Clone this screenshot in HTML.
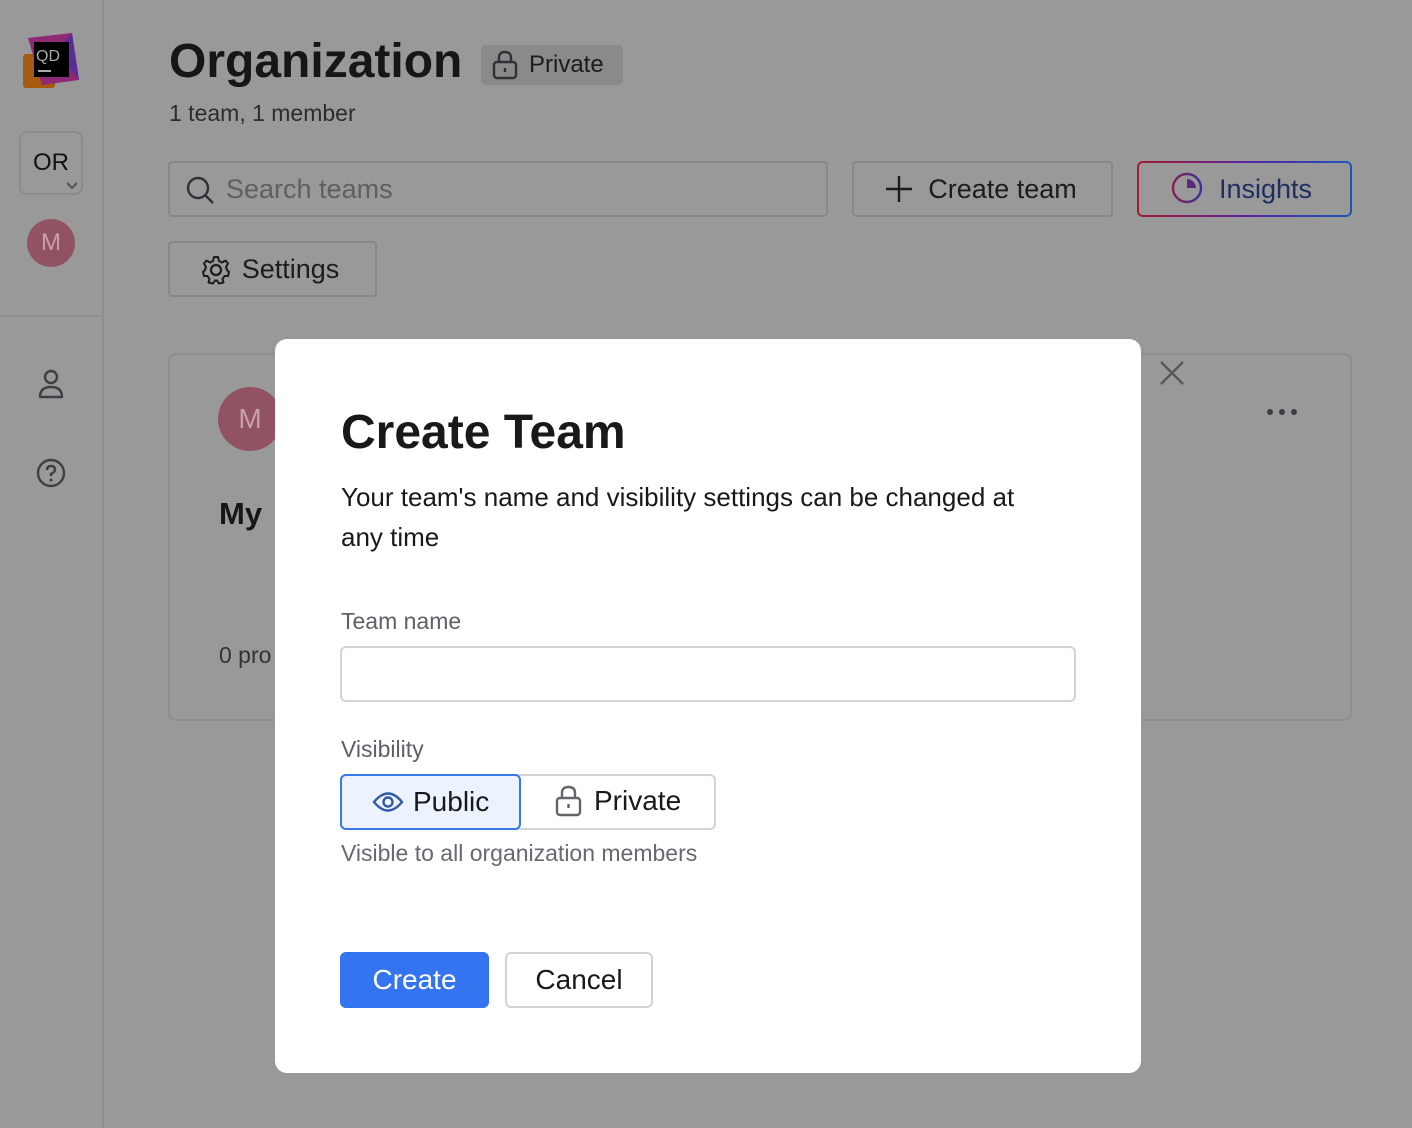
<!DOCTYPE html>
<html><head><meta charset="utf-8"><style>
*{box-sizing:border-box;margin:0;padding:0}
body{width:1412px;height:1128px;background:#999;font-family:"Liberation Sans",sans-serif;position:relative;overflow:hidden;color:#1a1a1a}
.a{position:absolute}
.btn{position:absolute;border:2px solid #85878b;border-radius:4px;display:flex;align-items:center;justify-content:center;font-size:27px;color:#1c1c1e}
</style></head><body>
<!-- sidebar -->
<div class="a" style="left:102px;top:0;width:2px;height:1128px;background:#8c8e92"></div>
<div class="a" style="left:0;top:315px;width:102px;height:2px;background:#8c8e92"></div>
<svg class="a" style="left:22px;top:32px" width="58" height="58" viewBox="0 0 58 58">
<rect x="1" y="22" width="32" height="34" rx="3" fill="#a85a10"/>
<path d="M6 6 L50 1 L57 48 L20 53 Z" fill="#8e2a74"/>
<path d="M34 20 L50 1 L57 48 Z" fill="#5b2d98"/>
<rect x="12" y="10" width="35" height="35" fill="#000"/>
<text x="14" y="29" font-size="16" fill="#aaa" font-family="Liberation Sans">QD</text>
<rect x="16" y="38" width="13" height="2" fill="#aaa"/>
</svg>
<div class="a" style="left:19px;top:131px;width:64px;height:64px;border:2px solid #8a8c90;border-radius:8px;font-size:24px;display:flex;align-items:center;justify-content:center;color:#111">OR</div>
<svg class="a" style="left:65px;top:180px" width="16" height="12"><path d="M2 3 L7 8 L12 3" stroke="#555" stroke-width="2" fill="none"/></svg>
<div class="a" style="left:27px;top:219px;width:48px;height:48px;border-radius:50%;background:#915261;color:#c8a0ab;font-size:24px;display:flex;align-items:center;justify-content:center">M</div>
<svg class="a" style="left:36px;top:368px" width="30" height="32" viewBox="0 0 30 32"><circle cx="15" cy="9" r="6" stroke="#3d3f44" stroke-width="2.4" fill="none"/><path d="M4 29 Q4 19 15 19 Q26 19 26 29 Z" stroke="#3d3f44" stroke-width="2.4" fill="none" stroke-linejoin="round"/></svg>
<svg class="a" style="left:36px;top:458px" width="30" height="30" viewBox="0 0 30 30"><circle cx="15" cy="15" r="13" stroke="#3d3f44" stroke-width="2.4" fill="none"/><path d="M11 12 Q11 8 15 8 Q19 8 19 11.5 Q19 14 15 16 L15 18" stroke="#3d3f44" stroke-width="2.4" fill="none"/><circle cx="15" cy="22" r="1.5" fill="#3d3f44"/></svg>
<!-- header -->
<div class="a" style="left:169px;top:34px;font-size:48px;font-weight:bold;color:#161616">Organization</div>
<div class="a" style="left:481px;top:45px;width:142px;height:40px;background:#8a8a8a;border-radius:5px;font-size:24px;display:flex;align-items:center;padding-left:48px;color:#1c1c1e">Private</div>
<svg class="a" style="left:492px;top:50px" width="26" height="30" viewBox="0 0 26 30"><rect x="2" y="12" width="22" height="16" rx="3" stroke="#2f3136" stroke-width="2.4" fill="none"/><path d="M7 12 V8 Q7 2 13 2 Q19 2 19 8 V12" stroke="#2f3136" stroke-width="2.4" fill="none"/><path d="M13 18 V22" stroke="#2f3136" stroke-width="2.4"/></svg>
<div class="a" style="left:169px;top:100px;font-size:23px;color:#2c2c2e">1 team, 1 member</div>
<div class="btn" style="left:168px;top:161px;width:660px;height:56px;justify-content:flex-start;padding-left:56px;color:#5d5f63">Search teams</div>
<svg class="a" style="left:184px;top:174px" width="32" height="32" viewBox="0 0 32 32"><circle cx="14" cy="14" r="10" stroke="#2f3136" stroke-width="2.4" fill="none"/><path d="M21 21 L29 29" stroke="#2f3136" stroke-width="2.4"/></svg>
<div class="btn" style="left:852px;top:161px;width:261px;height:56px;padding-left:40px">Create team</div>
<svg class="a" style="left:884px;top:174px" width="30" height="30"><path d="M15 2 V28 M2 15 H28" stroke="#1c1c1e" stroke-width="2.4"/></svg>
<div class="a" style="left:1137px;top:161px;width:215px;height:56px;border-radius:6px;background:linear-gradient(90deg,#a51c2c,#5a22a0 50%,#1e56b5);padding:2px"><div style="width:100%;height:100%;background:#999;border-radius:4px;font-size:27px;color:#1f2e60;padding-left:80px;display:flex;align-items:center">Insights</div></div>
<svg class="a" style="left:1170px;top:171px" width="34" height="34" viewBox="0 0 34 34"><defs><linearGradient id="g"><stop offset="0" stop-color="#8a2050"/><stop offset="1" stop-color="#3a2fa0"/></linearGradient></defs><circle cx="17" cy="17" r="14" stroke="url(#g)" stroke-width="2.4" fill="none"/><path d="M17 8 A9 9 0 0 1 26 17 L17 17 Z" fill="#5a2a80"/></svg>
<div class="btn" style="left:168px;top:241px;width:209px;height:56px;padding-left:36px">Settings</div>
<svg class="a" style="left:200px;top:254px" width="32" height="32" viewBox="0 0 32 32"><circle cx="16" cy="16" r="5" stroke="#1c1c1e" stroke-width="2.2" fill="none"/><path d="M14 3 H18 L19 7 L22 8.5 L25.5 6.5 L28 9.5 L26 13 L27 16 L29 18 L28 22 L24.5 22 L22.5 25 L23.5 28.5 L19 29.5 L17 26.5 H15 L13 29.5 L8.5 28.5 L9.5 25 L7.5 22 L4 22 L3 18 L5 16 L6 13 L4 9.5 L6.5 6.5 L10 8.5 L13 7 Z" stroke="#1c1c1e" stroke-width="2" fill="none" stroke-linejoin="round"/></svg>
<!-- card -->
<div class="a" style="left:168px;top:353px;width:1184px;height:368px;border:2px solid #8c8e92;border-radius:8px"></div>
<div class="a" style="left:218px;top:387px;width:64px;height:64px;border-radius:50%;background:#915261;color:#c8a0ab;font-size:28px;display:flex;align-items:center;justify-content:center">M</div>
<div class="a" style="left:219px;top:496px;font-size:31px;font-weight:bold;color:#161616">My</div>
<div class="a" style="left:219px;top:642px;font-size:23px;color:#333">0 pro</div>
<svg class="a" style="left:1158px;top:359px" width="28" height="28"><path d="M3 3 L25 25 M25 3 L3 25" stroke="#55575c" stroke-width="2.4"/></svg>
<div class="a" style="left:1266px;top:403px;width:34px;height:8px"><svg width="34" height="8"><circle cx="4" cy="4" r="3" fill="#3d3f44"/><circle cx="16" cy="4" r="3" fill="#3d3f44"/><circle cx="28" cy="4" r="3" fill="#3d3f44"/></svg></div>
<!-- dialog -->
<div class="a" style="left:275px;top:339px;width:866px;height:734px;background:#fff;border-radius:12px"></div>
<div class="a" style="left:341px;top:405px;font-size:48px;font-weight:bold;color:#19191b">Create Team</div>
<div class="a" style="left:341px;top:477px;width:690px;font-size:26px;line-height:40px;color:#19191b">Your team's name and visibility settings can be changed at any time</div>
<div class="a" style="left:341px;top:608px;font-size:23px;color:#5e6066">Team name</div>
<div class="a" style="left:340px;top:646px;width:736px;height:56px;border:2px solid #d1d3d8;border-radius:6px"></div>
<div class="a" style="left:341px;top:736px;font-size:23px;color:#5e6066">Visibility</div>
<div class="a" style="left:340px;top:774px;width:376px;height:56px;border:2px solid #d1d3d8;border-radius:6px"></div>
<div class="a" style="left:340px;top:774px;width:181px;height:56px;border:2px solid #3a78e8;border-radius:6px;background:#edf3fe;font-size:28px;color:#19191b;display:flex;align-items:center;padding-left:71px">Public</div>
<svg class="a" style="left:372px;top:789px" width="32" height="26" viewBox="0 0 32 26"><path d="M2 13 Q16 -4 30 13 Q16 30 2 13 Z" stroke="#2f5aa8" stroke-width="2.4" fill="none"/><circle cx="16" cy="13" r="4.5" stroke="#2f5aa8" stroke-width="2.4" fill="none"/></svg>
<div class="a" style="left:594px;top:785px;font-size:28px;color:#19191b">Private</div>
<svg class="a" style="left:555px;top:785px" width="28" height="32" viewBox="0 0 28 32"><rect x="2" y="13" width="23" height="17" rx="3" stroke="#62646a" stroke-width="2.4" fill="none"/><path d="M7 13 V8 Q7 2 13.5 2 Q20 2 20 8 V13" stroke="#62646a" stroke-width="2.4" fill="none"/><path d="M13.5 19 V23" stroke="#62646a" stroke-width="2.4"/></svg>
<div class="a" style="left:341px;top:840px;font-size:23px;color:#676970">Visible to all organization members</div>
<div class="a" style="left:340px;top:952px;width:149px;height:56px;background:#3574f0;border-radius:6px;color:#fff;font-size:28px;display:flex;align-items:center;justify-content:center">Create</div>
<div class="a" style="left:505px;top:952px;width:148px;height:56px;border:2px solid #d1d3d8;border-radius:6px;color:#19191b;font-size:28px;display:flex;align-items:center;justify-content:center">Cancel</div>
</body></html>
